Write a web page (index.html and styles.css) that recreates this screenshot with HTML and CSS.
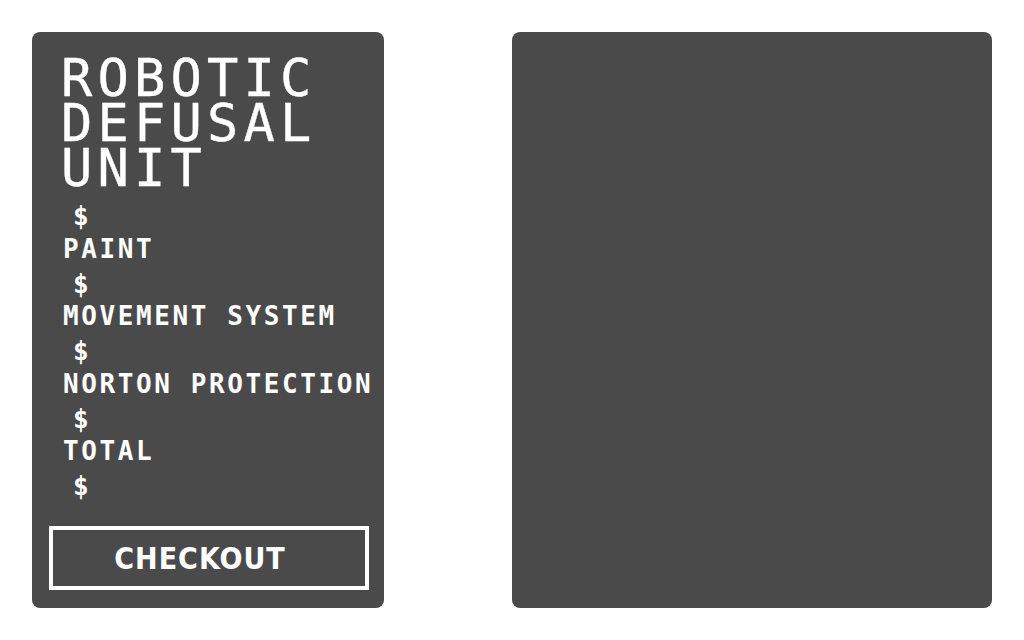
FILE: index.html
```html
<!DOCTYPE html>
<html>
<head>
<meta charset="utf-8">
<link rel="stylesheet" href="styles.css">
</head>
<body>
<main class="page">
  <section class="card summary">
    <h1 class="title">ROBOTIC<br>DEFUSAL<br>UNIT</h1>
    <ul class="items">
      <li class="price">$</li>
      <li class="label">PAINT</li>
      <li class="price">$</li>
      <li class="label">MOVEMENT SYSTEM</li>
      <li class="price">$</li>
      <li class="label">NORTON PROTECTION</li>
      <li class="price">$</li>
      <li class="label">TOTAL</li>
      <li class="price">$</li>
    </ul>
    <button class="checkout">CHECKOUT</button>
  </section>
  <section class="card preview"></section>
</main>
</body>
</html>
```
FILE: styles.css
```css
html, body {
  margin: 0;
  padding: 0;
  background: #ffffff;
}
.page {
  box-sizing: border-box;
  width: 1024px;
  height: 640px;
  padding: 32px;
  display: flex;
  justify-content: space-between;
}
.card {
  background: #4a4a4a;
  border-radius: 8px;
  height: 576px;
  box-sizing: border-box;
}
.summary {
  width: 352px;
  display: flex;
  flex-direction: column;
  padding: 24px 15px 18px 17px;
  color: #ffffff;
  font-family: "DejaVu Sans Mono", monospace;
}
.preview {
  width: 480px;
}
.title {
  margin: 0 0 7px 0;
  padding-left: 12px;
  font-size: 52px;
  font-weight: normal;
  line-height: 45px;
  letter-spacing: 0.1em;
  -webkit-text-stroke: 0.4px #ffffff;
}
.items {
  list-style: none;
  margin: 0;
  padding: 0 0 0 14px;
  font-size: 26px;
  font-weight: bold;
  line-height: 33.75px;
  letter-spacing: 0.1em;
  white-space: nowrap;
}
.price {
  padding-left: 10px;
  padding-top: 2px;
  line-height: 33.75px;
}
.label {
  line-height: 31.75px;
}
.checkout {
  margin-top: auto;
  align-self: center;
  width: 320px;
  height: 64px;
  box-sizing: border-box;
  background: transparent;
  border: 4px solid #ffffff;
  color: #ffffff;
  font-family: "DejaVu Sans Condensed", "DejaVu Sans", sans-serif;
  font-weight: bold;
  font-size: 30px;
  letter-spacing: 1px;
  padding: 0 18px 0 0;
}
```
